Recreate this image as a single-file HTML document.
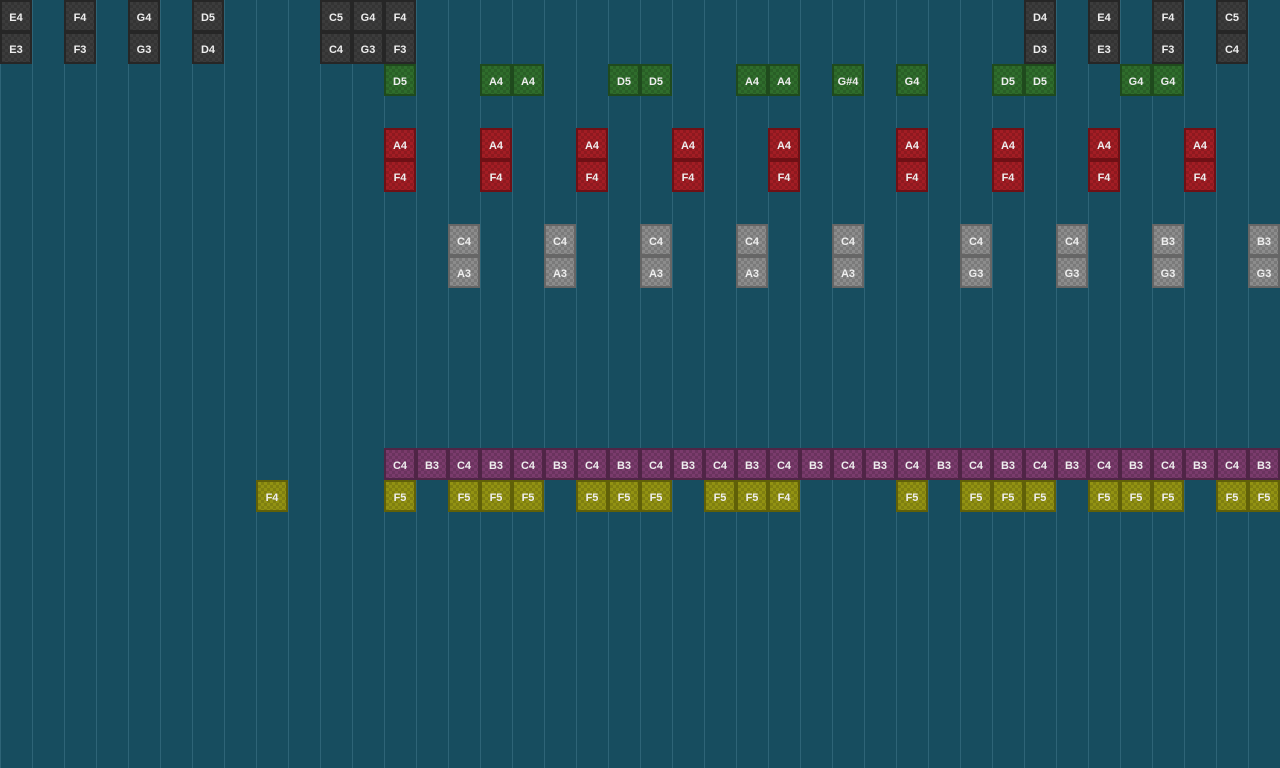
<!DOCTYPE html>
<html><head><meta charset="utf-8"><style>
html,body{margin:0;padding:0}
body{width:1280px;height:768px;overflow:hidden;background-color:#174d5f;
background-image:linear-gradient(to right,#2e6477 1px,transparent 1px);background-size:32px 32px;position:relative;font-family:"Liberation Sans",sans-serif}
.n{position:absolute;width:28px;height:28px;border:2px solid;box-sizing:content-box;color:#eee;font-size:11px;font-weight:bold;line-height:32px;text-align:center;
background-image:repeating-conic-gradient(rgba(0,0,0,.13) 0 25%,transparent 0 50%);background-size:6px 6px}
.k{background-color:#3c3c3c;border-color:#262626}
.g{background-color:#2f6d2c;border-color:#1f4a1d}
.r{background-color:#a31d24;border-color:#6e1015}
.s{background-color:#8c8c8c;border-color:#666}
.p{background-color:#7a3b6c;border-color:#4f2546}
.y{background-color:#929212;border-color:#606008}
</style></head><body>
<script>
function add(cls,row,col,t){document.write('<div class="n '+cls+'" style="left:'+(col*32)+'px;top:'+(row*32)+'px">'+t+'</div>');}
[[0,'E4'],[2,'F4'],[4,'G4'],[6,'D5'],[10,'C5'],[11,'G4'],[12,'F4'],[32,'D4'],[34,'E4'],[36,'F4'],[38,'C5']].forEach(a=>add('k',0,a[0],a[1]));
[[0,'E3'],[2,'F3'],[4,'G3'],[6,'D4'],[10,'C4'],[11,'G3'],[12,'F3'],[32,'D3'],[34,'E3'],[36,'F3'],[38,'C4']].forEach(a=>add('k',1,a[0],a[1]));
[[12,'D5'],[15,'A4'],[16,'A4'],[19,'D5'],[20,'D5'],[23,'A4'],[24,'A4'],[26,'G#4'],[28,'G4'],[31,'D5'],[32,'D5'],[35,'G4'],[36,'G4']].forEach(a=>add('g',2,a[0],a[1]));
[12,15,18,21,24,28,31,34,37].forEach(c=>{add('r',4,c,'A4');add('r',5,c,'F4');});
[14,17,20,23,26,30,33].forEach(c=>add('s',7,c,'C4'));[36,39].forEach(c=>add('s',7,c,'B3'));
[14,17,20,23,26].forEach(c=>add('s',8,c,'A3'));[30,33,36,39].forEach(c=>add('s',8,c,'G3'));
for(var c=12;c<40;c++)add('p',14,c,(c%2==0)?'C4':'B3');
add('y',15,8,'F4');
[12,14,15,16,18,19,20,22,23].forEach(c=>add('y',15,c,'F5'));add('y',15,24,'F4');
[28,30,31,32,34,35,36,38,39].forEach(c=>add('y',15,c,'F5'));
</script>
</body></html>
